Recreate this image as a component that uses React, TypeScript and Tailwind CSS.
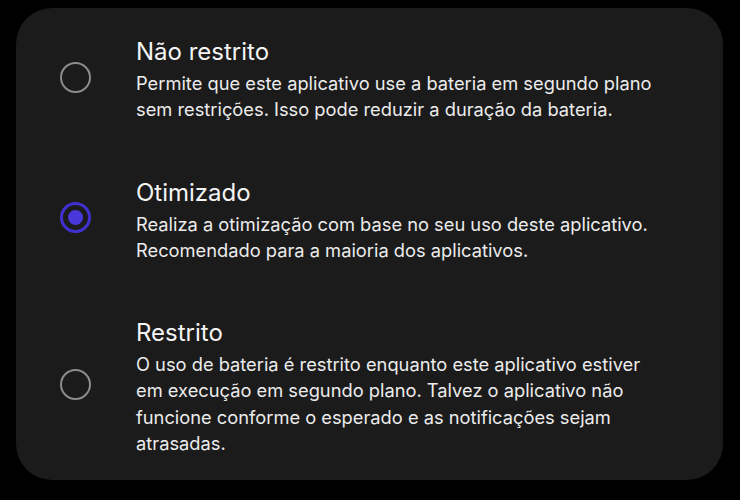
const options = [
  {
    title: "Não restrito",
    lines: [
      "Permite que este aplicativo use a bateria em segundo plano",
      "sem restrições. Isso pode reduzir a duração da bateria.",
    ],
    selected: false,
  },
  {
    title: "Otimizado",
    lines: [
      "Realiza a otimização com base no seu uso deste aplicativo.",
      "Recomendado para a maioria dos aplicativos.",
    ],
    selected: true,
  },
  {
    title: "Restrito",
    lines: [
      "O uso de bateria é restrito enquanto este aplicativo estiver",
      "em execução em segundo plano. Talvez o aplicativo não",
      "funcione conforme o esperado e as notificações sejam",
      "atrasadas.",
    ],
    selected: false,
  },
];

const Radio = ({ selected }: { selected: boolean }) =>
  selected ? (
    <span className="mb-[5px] flex h-[31px] w-[31px] shrink-0 items-center justify-center rounded-full border-[3px] border-[#4031cf]">
      <span className="h-[15px] w-[15px] rounded-full bg-[#4838dc]" />
    </span>
  ) : (
    <span className="mb-[5px] block h-[31px] w-[31px] shrink-0 rounded-full border-[2.5px] border-[#8c8c8c]" />
  );

export default function App() {
  return (
    <div className="min-h-[500px] w-[740px] bg-black pt-2 pl-4" style={{ fontFamily: "Inter, Roboto, sans-serif" }}>
      <div className="flex h-[472px] w-[707px] flex-col gap-[55px] rounded-[36px] bg-[#1b1b1b] pt-[29px] pl-[44px] pr-6">
        {options.map((opt, i) => (
          <div key={i} className="flex items-center gap-[45px]">
            <Radio selected={opt.selected} />
            <div className="flex flex-col gap-[3px]">
              <h3 className="text-[24px] leading-[30px] text-[#f4f4f4]">{opt.title}</h3>
              <p className="whitespace-nowrap text-[18.3px] leading-[26.3px] text-[#ececec]">
                {opt.lines.map((l, j) => (
                  <span key={j} className="block">
                    {l}
                  </span>
                ))}
              </p>
            </div>
          </div>
        ))}
      </div>
    </div>
  );
}
